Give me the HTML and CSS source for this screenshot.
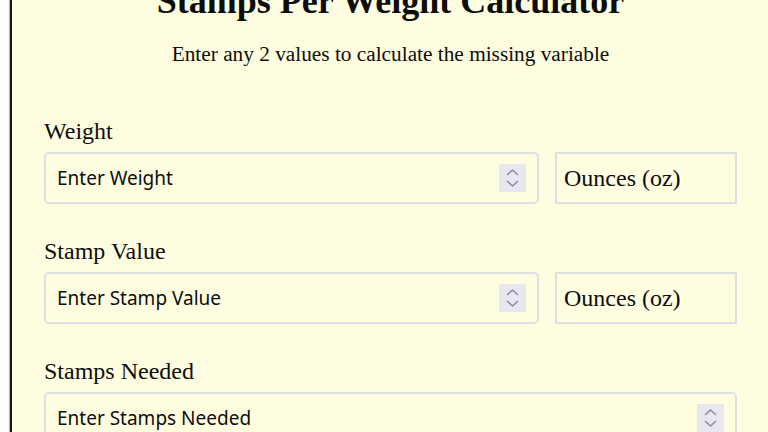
FILE: index.html
```html
<!DOCTYPE html>
<html lang="en">
<head>
<meta charset="utf-8">
<title>Stamps Per Weight Calculator</title>
<link rel="stylesheet" href="styles.css">
</head>
<body>
<main class="calc">
  <h1 class="calc-title">Stamps Per Weight Calculator</h1>
  <p class="calc-sub">Enter any 2 values to calculate the missing variable</p>
  <form class="calc-form">
    <div class="group">
      <label class="group-label" for="weight">Weight</label>
      <div class="row">
        <div class="field">
          <input id="weight" class="field-input" type="text" placeholder="Enter Weight">
          <span class="spin"><svg width="27" height="28" viewBox="0 0 27 28"><path d="M8.5 10.5 L13.5 6 L18.5 10.5 M8.5 17.5 L13.5 22 L18.5 17.5" fill="none" stroke="#8d8c9c" stroke-width="1.6" stroke-linecap="round" stroke-linejoin="round"/></svg></span>
        </div>
        <select class="unit"><option>Ounces (oz)</option></select>
      </div>
    </div>
    <div class="group">
      <label class="group-label" for="stamp">Stamp Value</label>
      <div class="row">
        <div class="field">
          <input id="stamp" class="field-input" type="text" placeholder="Enter Stamp Value">
          <span class="spin"><svg width="27" height="28" viewBox="0 0 27 28"><path d="M8.5 10.5 L13.5 6 L18.5 10.5 M8.5 17.5 L13.5 22 L18.5 17.5" fill="none" stroke="#8d8c9c" stroke-width="1.6" stroke-linecap="round" stroke-linejoin="round"/></svg></span>
        </div>
        <select class="unit"><option>Ounces (oz)</option></select>
      </div>
    </div>
    <div class="group">
      <label class="group-label" for="needed">Stamps Needed</label>
      <div class="row">
        <div class="field">
          <input id="needed" class="field-input" type="text" placeholder="Enter Stamps Needed">
          <span class="spin"><svg width="27" height="28" viewBox="0 0 27 28"><path d="M8.5 10.5 L13.5 6 L18.5 10.5 M8.5 17.5 L13.5 22 L18.5 17.5" fill="none" stroke="#8d8c9c" stroke-width="1.6" stroke-linecap="round" stroke-linejoin="round"/></svg></span>
        </div>
      </div>
    </div>
  </form>
</main>
</body>
</html>
```
FILE: styles.css
```css
html, body {
  margin: 0;
  padding: 0;
  overflow: hidden;
  background: #fdfdfd;
}

body {
  font-family: "Liberation Serif", "Times New Roman", serif;
  color: #0d0d0d;
}

.calc {
  margin-left: 10px;
  width: 693px;
  padding: 0 32px 40px;
  background: #fffde0;
  border-left: 2px solid #151515;
  box-shadow: -1px 0 1px rgba(0, 0, 0, 0.25);
}

.calc-title {
  margin: -19px 0 20px;
  font-size: 36px;
  line-height: 41px;
  font-weight: bold;
  text-align: center;
}

.calc-sub {
  margin: 0;
  font-size: 21.3px;
  line-height: 25.6px;
  text-align: center;
}

.calc-form {
  margin-top: 49px;
}

.group {
  margin-bottom: 33px;
}

.group-label {
  display: block;
  font-size: 24px;
  line-height: 28px;
  margin-bottom: 7px;
}

.row {
  display: flex;
  gap: 16px;
}

.field {
  flex: 1;
  display: flex;
  align-items: center;
  box-sizing: border-box;
  height: 52px;
  padding: 0 11px;
  border: 2px solid #dde0e2;
  border-radius: 5px;
}

.field-input {
  flex: 1;
  min-width: 0;
  border: none;
  outline: none;
  background: transparent;
  padding: 0;
  font-family: "Noto Sans", "Open Sans", sans-serif;
  font-size: 19px;
  color: #0d0d0d;
}

.field-input::placeholder {
  color: #0d0d0d;
  opacity: 1;
}

.spin {
  display: flex;
  width: 27px;
  height: 28px;
  background: #e8e7ef;
}

.unit {
  -webkit-appearance: none;
  appearance: none;
  box-sizing: border-box;
  width: 182px;
  height: 52px;
  padding: 0 7px;
  border: 2px solid #dde0e2;
  border-radius: 0;
  background: transparent;
  font-family: "Liberation Serif", "Times New Roman", serif;
  font-size: 24px;
  color: #0d0d0d;
}
```
